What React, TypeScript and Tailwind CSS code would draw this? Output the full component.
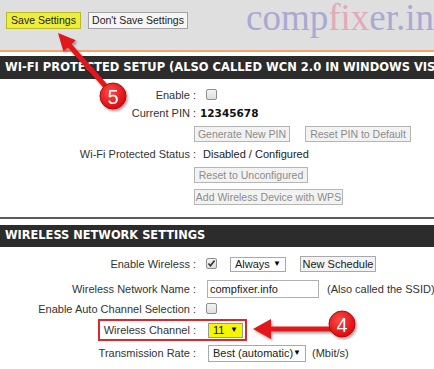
import React from 'react';

const Check = ({ checked = false }: { checked?: boolean }) => (
  <span className="inline-flex w-[11px] h-[11px] items-center justify-center rounded-[2px] border border-[#8f8f8f] bg-gradient-to-b from-[#f4f4f4] to-[#dedede]">
    {checked && (
      <svg width="9" height="9" viewBox="0 0 9 9">
        <path d="M1.5 4.5 L3.5 6.8 L7.6 1.6" fill="none" stroke="#333" strokeWidth="1.6" />
      </svg>
    )}
  </span>
);

const Caret = () => <span className="text-[8px] leading-none text-black">▼</span>;

const Row = ({
  label,
  children,
  className = '',
}: {
  label: string;
  children?: React.ReactNode;
  className?: string;
}) => (
  <div className={`flex items-center ${className}`}>
    <div className="w-[197px] shrink-0 text-right pr-[1px] whitespace-nowrap">{label}</div>
    <div className="flex items-center whitespace-nowrap">{children}</div>
  </div>
);

const GrayButton = ({ children, className = '' }: { children: React.ReactNode; className?: string }) => (
  <div
    className={`h-[16px] flex items-center justify-center border border-[#b5b5b5] bg-[#f2f2f2] text-[10.5px] text-[#8c8c8c] whitespace-nowrap ${className}`}
  >
    {children}
  </div>
);

const Overlay = () => (
  <svg className="absolute inset-0 pointer-events-none" width="434" height="369" viewBox="0 0 434 369">
    <defs>
      <filter id="sh" x="-30%" y="-30%" width="160%" height="160%">
        <feDropShadow dx="1.5" dy="2" stdDeviation="1.2" floodColor="#000" floodOpacity="0.35" />
      </filter>
      <radialGradient id="rg" cx="40%" cy="35%" r="70%">
        <stop offset="0%" stopColor="#ff4a44" />
        <stop offset="100%" stopColor="#d8050d" />
      </radialGradient>
    </defs>
    {/* arrow 5 */}
    <g filter="url(#sh)" fill="#e3151b" stroke="none">
      <line x1="108" y1="89" x2="69" y2="45" stroke="#e3151b" strokeWidth="5" />
      <polygon points="58,33 63.5,51.5 75.8,40.2" />
    </g>
    <g filter="url(#sh)">
      <circle cx="113" cy="96" r="13" fill="url(#rg)" stroke="#b8060c" strokeWidth="1" />
      <text x="113" y="103.5" textAnchor="middle" fontFamily="Liberation Sans, sans-serif" fontSize="20" fill="#fff">
        5
      </text>
    </g>
    {/* arrow 4 */}
    <g filter="url(#sh)" fill="#e3151b">
      <rect x="268" y="326.5" width="64" height="5" />
      <polygon points="253,329 271,319 271,339" />
    </g>
    <g filter="url(#sh)">
      <circle cx="342" cy="324" r="13" fill="url(#rg)" stroke="#b8060c" strokeWidth="1" />
      <text x="342" y="331.5" textAnchor="middle" fontFamily="Liberation Sans, sans-serif" fontSize="20" fill="#fff">
        4
      </text>
    </g>
  </svg>
);

export default function App() {
  return (
    <div className="relative w-[434px] h-[369px] overflow-hidden bg-white text-[11px] leading-none text-[#333] font-['Liberation_Sans',Arial,sans-serif]">
      {/* top toolbar */}
      <div className="h-[52px] bg-[#dfdfdf] border-b-2 border-[#f3a46a] flex items-start whitespace-nowrap overflow-hidden">
        <div className="shrink-0 mt-[12px] ml-[6px] h-[17px] w-[75px] flex items-center justify-center border border-[#b9b92a] bg-[#eeee3a] text-[10.5px] text-[#222]">
          Save Settings
        </div>
        <div className="shrink-0 mt-[12px] ml-[7px] h-[17px] w-[100px] flex items-center justify-center border border-[#a3a3a3] bg-[#f5f5f5] text-[10.5px] text-[#222]">
          Don't Save Settings
        </div>
        <div className="shrink-0 ml-[58px] mt-[1px] text-[37px] leading-[34px] font-['Liberation_Serif',serif] text-[#a9a9d2]">
          comp<span className="text-[#e3a9b8]">fix</span>er.in
        </div>
      </div>

      {/* WPS section */}
      <div className="mt-[4px] h-[23px] bg-[#2c2c2c] flex items-center pl-[5px] whitespace-nowrap overflow-hidden text-white font-bold text-[11.5px] font-['DejaVu_Sans',Verdana,sans-serif]">
        WI-FI PROTECTED SETUP (ALSO CALLED WCN 2.0 IN WINDOWS VISTA)
      </div>

      <Row label="Enable :" className="mt-[7px] h-[18px]">
        <span className="ml-[9px]">
          <Check />
        </span>
      </Row>
      <Row label="Current PIN :" className="h-[18px]">
        <span className="ml-[3px] font-bold text-[10.5px] text-[#111] font-['DejaVu_Sans',Verdana,sans-serif]">12345678</span>
      </Row>
      <div className="mt-[4px] flex pl-[194px]">
        <GrayButton className="w-[96px]">Generate New PIN</GrayButton>
        <GrayButton className="ml-[15px] w-[106px]">Reset PIN to Default</GrayButton>
      </div>
      <Row label="Wi-Fi Protected Status :" className="mt-[3px] h-[18px]">
        <span className="ml-[6px] text-[#222]">Disabled / Configured</span>
      </Row>
      <div className="mt-[4px] flex pl-[194px]">
        <GrayButton className="w-[114px]">Reset to Unconfigured</GrayButton>
      </div>
      <div className="mt-[6px] flex pl-[194px]">
        <GrayButton className="w-[149px]">Add Wireless Device with WPS</GrayButton>
      </div>

      <div className="mt-[12px] h-[2px] bg-[#5a5a5a]" />

      {/* Wireless section */}
      <div className="mt-[6px] h-[22px] bg-[#2c2c2c] flex items-center pl-[5px] whitespace-nowrap text-white font-bold text-[11.4px] font-['DejaVu_Sans',Verdana,sans-serif]">
        WIRELESS NETWORK SETTINGS
      </div>

      <Row label="Enable Wireless :" className="mt-[8px] h-[18px]">
        <span className="ml-[9px]">
          <Check checked />
        </span>
        <div className="ml-[13px] h-[15px] w-[56px] border border-[#a9a9a9] bg-white flex items-center justify-between px-[4px] text-[#222]">
          Always <Caret />
        </div>
        <div className="ml-[14px] h-[16px] w-[76px] border border-[#a9a9a9] bg-[#f3f3f3] flex items-center justify-center text-[#222]">
          New Schedule
        </div>
      </Row>
      <Row label="Wireless Network Name :" className="mt-[6px] h-[20px]">
        <div className="ml-[10px] h-[18px] w-[112px] border border-[#b0b0b0] bg-white flex items-center px-[2px] text-[#222]">
          compfixer.info
        </div>
        <span className="ml-[8px]">(Also called the SSID)</span>
      </Row>
      <Row label="Enable Auto Channel Selection :" className="mt-[1px] h-[18px]">
        <span className="ml-[9px]">
          <Check />
        </span>
      </Row>
      <div className="mt-[1px] ml-[98px] w-[149px] h-[22px] border-2 border-[#e2242b] flex items-center">
        <div className="w-[97px] shrink-0 text-right pr-[1px] whitespace-nowrap">Wireless Channel :</div>
        <div className="ml-[11px] h-[15px] w-[35px] border border-[#9a9a9a] bg-[#f6f600] flex items-center justify-between px-[4px] text-[#111]">
          11 <Caret />
        </div>
      </div>
      <Row label="Transmission Rate :" className="mt-[2px] h-[20px]">
        <div className="ml-[11px] h-[17px] w-[98px] border border-[#a9a9a9] bg-white flex items-center justify-between px-[4px] text-[#222]">
          Best (automatic) <Caret />
        </div>
        <span className="ml-[6px]">(Mbit/s)</span>
      </Row>
      <Row label="WMM Enable :" className="mt-[6px] h-[18px]">
        <span className="ml-[9px]">
          <Check />
        </span>
      </Row>

      <Overlay />
    </div>
  );
}
